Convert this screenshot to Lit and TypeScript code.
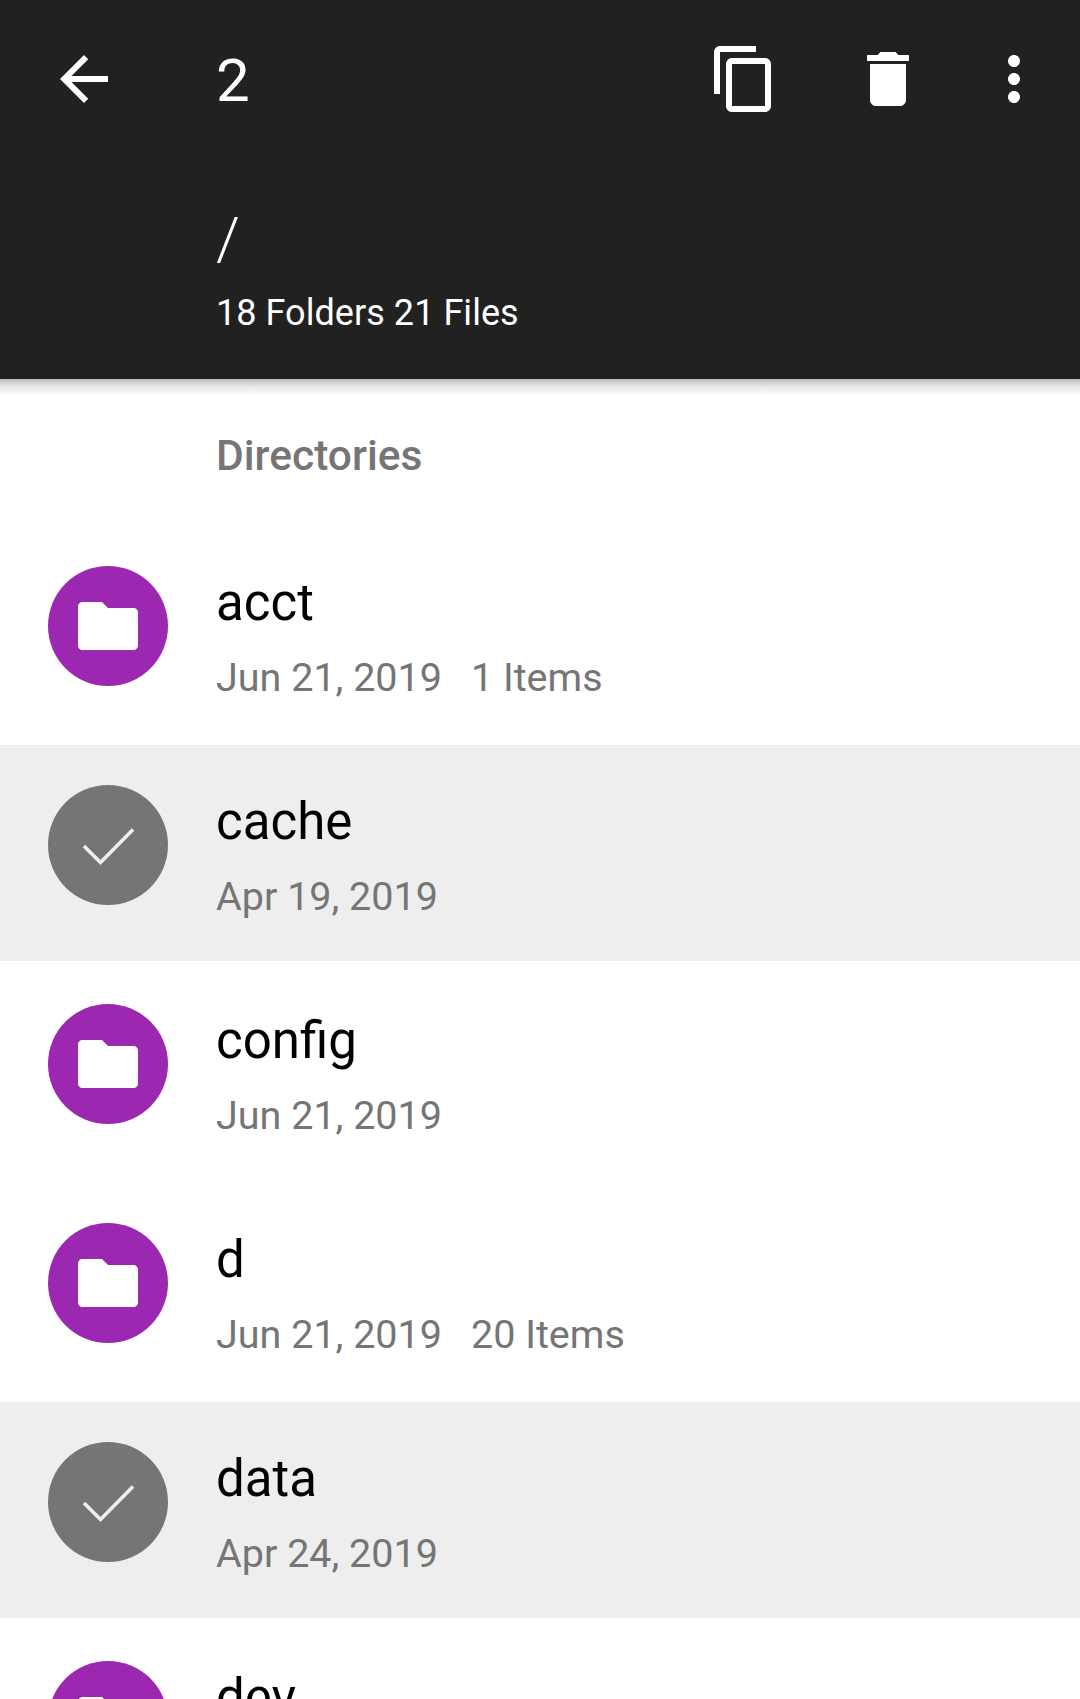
import { LitElement, html, css, svg } from 'lit';
import { customElement } from 'lit/decorators.js';
import { classMap } from 'lit/directives/class-map.js';

interface Entry {
  name: string;
  date: string;
  items?: string;
  selected?: boolean;
}

const entries: Entry[] = [
  { name: 'acct', date: 'Jun 21, 2019', items: '1 Items' },
  { name: 'cache', date: 'Apr 19, 2019', selected: true },
  { name: 'config', date: 'Jun 21, 2019' },
  { name: 'd', date: 'Jun 21, 2019', items: '20 Items' },
  { name: 'data', date: 'Apr 24, 2019', selected: true },
  { name: 'dev', date: 'Jun 21, 2019' },
];

const icon = (d: string) => html`<svg class="icon" viewBox="0 0 24 24">${svg`<path d=${d}></path>`}</svg>`;

const BACK = 'M20 11H7.83l5.59-5.59L12 4l-8 8 8 8 1.41-1.41L7.83 13H20v-2z';
const COPY = 'M16 1H4c-1.1 0-2 .9-2 2v14h2V3h12V1zm3 4H8c-1.1 0-2 .9-2 2v14c0 1.1.9 2 2 2h11c1.1 0 2-.9 2-2V7c0-1.1-.9-2-2-2zm0 16H8V7h11v14z';
const TRASH = 'M6 19c0 1.1.9 2 2 2h8c1.1 0 2-.9 2-2V7H6v12zM19 4h-3.5l-1-1h-5l-1 1H5v2h14V4z';
const MORE = 'M12 8c1.1 0 2-.9 2-2s-.9-2-2-2-2 .9-2 2 .9 2 2 2zm0 2c-1.1 0-2 .9-2 2s.9 2 2 2 2-.9 2-2-.9-2-2-2zm0 6c-1.1 0-2 .9-2 2s.9 2 2 2 2-.9 2-2-.9-2-2-2z';
const FOLDER = 'M10 4H3.5C2.7 4 2 4.7 2 5.5v13c0 .8.7 1.5 1.5 1.5h17c.8 0 1.5-.7 1.5-1.5v-11C22 6.700 21.300 6 20.500 6H12l-2-2z';

@customElement('app-root')
export class AppRoot extends LitElement {
  static styles = css`
    :host {
      display: block;
      width: 1080px;
      height: 1699px;
      overflow: hidden;
      background: #fff;
      font-family: Roboto, "Liberation Sans", sans-serif;
    }

    .icon {
      display: block;
      width: 72px;
      height: 72px;
      flex: none;
      fill: currentColor;
    }

    header {
      position: relative;
      z-index: 1;
      height: 379px;
      box-sizing: border-box;
      padding-top: 43px;
      background: #212121;
      color: #fff;
    }

    /* toolbar shadow, a plain gradient like the native elevation strip */
    header::after {
      content: "";
      position: absolute;
      top: 100%;
      left: 0;
      right: 0;
      height: 17px;
      background: linear-gradient(rgba(0, 0, 0, 0.26), rgba(0, 0, 0, 0.09) 45%, rgba(0, 0, 0, 0));
    }

    .toolbar {
      display: flex;
      align-items: center;
      height: 72px;
      padding: 0 30px 0 48px;
    }

    .count {
      margin: 4px 0 0 96px;
      font-size: 60px;
      line-height: 72px;
    }

    .actions {
      display: flex;
      margin-left: auto;
    }

    .actions .icon:nth-child(1) { margin-right: 72px; }
    .actions .icon:nth-child(2) { margin-right: 54px; }

    .path {
      margin: 94px 0 0 216px;
      font-size: 60px;
      font-weight: 300;
      line-height: 60px;
    }

    .summary {
      margin: 22px 0 0 216px;
      font-size: 36px;
      line-height: 44px;
      letter-spacing: 0.05px;
    }

    .section {
      height: 147px;
      box-sizing: border-box;
      padding: 53px 0 0 216px;
      font-size: 42.5px;
      font-weight: 500;
      line-height: 48px;
      color: #757575;
    }

    .row {
      display: flex;
      height: 216px;
      margin-bottom: 3px;
      box-sizing: border-box;
      padding: 40px 0 0 48px;
    }

    .row.selected {
      background: #eeeeee;
    }

    .avatar {
      display: flex;
      align-items: center;
      justify-content: center;
      width: 120px;
      height: 120px;
      flex: none;
      border-radius: 50%;
      background: #9c27b0;
      color: #fff;
    }

    .selected .avatar {
      background: #757575;
    }

    .check {
      fill: none;
      stroke: #eeeeee;
      stroke-width: 3.6px;
    }

    .text {
      margin-left: 48px;
    }

    .name {
      margin-top: 9px;
      font-size: 51px;
      line-height: 56px;
      color: #000;
    }

    .meta {
      display: flex;
      gap: 29px;
      margin-top: 23px;
      font-size: 39.5px;
      line-height: 48px;
      color: #757575;
    }
  `;

  private renderRow(entry: Entry) {
    return html`
      <div class="row ${classMap({ selected: !!entry.selected })}">
        <div class="avatar">
          ${entry.selected
            ? html`<svg class="icon check" viewBox="0 0 72 72"><path d="M12 37 L28.500 53.500 L61 20.500"></path></svg>`
            : icon(FOLDER)}
        </div>
        <div class="text">
          <div class="name">${entry.name}</div>
          <div class="meta">
            <span>${entry.date}</span>
            ${entry.items ? html`<span>${entry.items}</span>` : null}
          </div>
        </div>
      </div>
    `;
  }

  render() {
    return html`
      <header>
        <div class="toolbar">
          ${icon(BACK)}
          <div class="count">2</div>
          <div class="actions">${icon(COPY)}${icon(TRASH)}${icon(MORE)}</div>
        </div>
        <div class="path">/</div>
        <div class="summary">18 Folders 21 Files</div>
      </header>
      <div class="section">Directories</div>
      ${entries.map((e) => this.renderRow(e))}
    `;
  }
}
